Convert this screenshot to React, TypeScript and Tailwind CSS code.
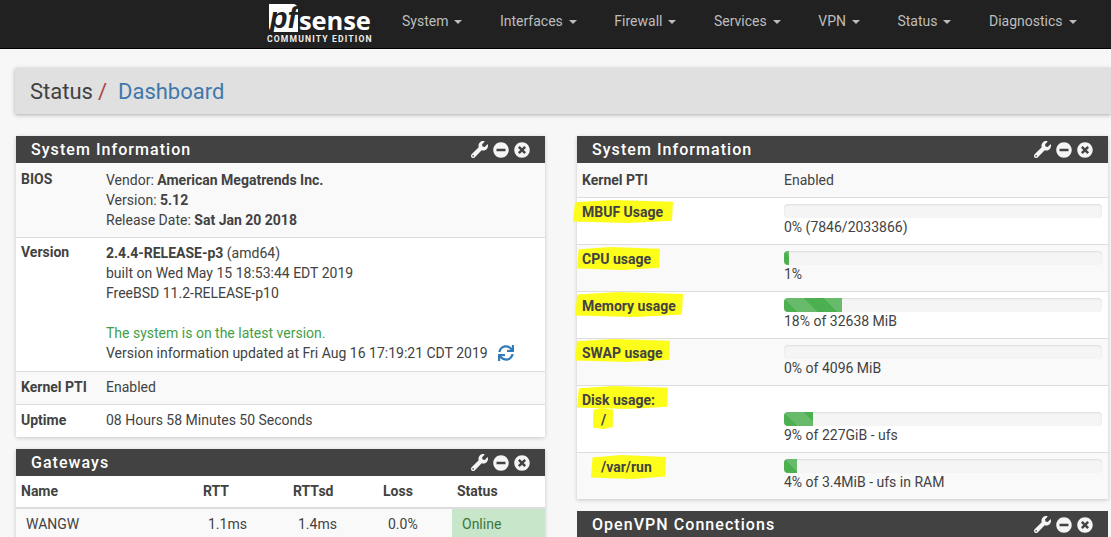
import { FaWrench, FaMinusCircle, FaTimesCircle, FaSync } from "react-icons/fa";

const nav = ["System", "Interfaces", "Firewall", "Services", "VPN", "Status", "Diagnostics"];

function Heading({ title }: { title: string }) {
  return (
    <div className="h-[27px] bg-[#424242] flex items-center justify-between pl-[15px] pr-[15px] shrink-0">
      <span className="text-white text-[16px] font-medium tracking-[1.05px] leading-none pt-[1px]">{title}</span>
      <span className="flex items-center gap-[5px] text-[#f5f5f5]">
        <FaWrench className="w-[17px] h-[17px]" />
        <FaMinusCircle className="w-[16px] h-[16px]" />
        <FaTimesCircle className="w-[16px] h-[16px]" />
      </span>
    </div>
  );
}

function Mark({ className }: { className: string }) {
  return (
    <span
      className={`absolute bg-[#fdfd1c] [clip-path:polygon(2%_10%,40%_0,100%_8%,99%_90%,55%_100%,0_94%)] ${className}`}
    />
  );
}

function Bar({ pct, text }: { pct: number; text: string }) {
  return (
    <div className="w-[318px]">
      <div className="h-[14px] bg-[#f5f5f5] rounded-[4px] overflow-hidden shadow-[inset_0_1px_2px_rgba(0,0,0,0.1)]">
        <div
          className="h-full bg-[#4caf50] bg-[linear-gradient(45deg,rgba(255,255,255,.15)_25%,transparent_25%,transparent_50%,rgba(255,255,255,.15)_50%,rgba(255,255,255,.15)_75%,transparent_75%,transparent)] bg-[length:40px_40px]"
          style={{ width: `${pct}%` }}
        />
      </div>
      <div className="leading-[20px] -mt-[1px]">{text}</div>
    </div>
  );
}

function UsageRow({
  label,
  pct,
  text,
  h,
  odd,
  mark,
}: {
  label: string;
  pct: number;
  text: string;
  h: string;
  odd?: boolean;
  mark: string;
}) {
  return (
    <div className={`${h} flex border-t border-[#dddddd] ${odd ? "bg-[#f9f9f9]" : "bg-white"}`}>
      <div className="w-[207px] pl-[5px] pt-[4px] font-bold leading-[20px] relative">
        <Mark className={mark} />
        <span className="relative">{label}</span>
      </div>
      <div className="pt-[6px]">
        <Bar pct={pct} text={text} />
      </div>
    </div>
  );
}

export default function App() {
  return (
    <div className="w-[1111px] h-[537px] overflow-hidden bg-[#f7f7f7] text-[14px] text-[#424242] font-['Roboto',sans-serif]">
      <header className="h-[49px] bg-[#212121] border-b border-black flex items-start pl-[267px]">
        <div className="w-[106px] shrink-0 flex flex-col items-start pt-[4px]">
          <div className="flex items-end h-[28px] pl-[2px]">
            <span className="bg-white text-[#212121] italic font-bold text-[29px] leading-[28px] h-[28px] w-[29px] flex items-center justify-center rounded-tr-[5px] rounded-bl-[5px] font-['Liberation_Sans',sans-serif]">
              pf
            </span>
            <span className="text-white font-bold text-[25.5px] leading-[24px] ml-[1px] tracking-[-0.1px] font-['Open_Sans',sans-serif]">sense</span>
          </div>
          <span className="text-[#eeeeee] font-bold text-[8.6px] leading-[10px] tracking-[1.15px] mt-[2px] whitespace-nowrap">
            COMMUNITY EDITION
          </span>
        </div>
        <nav className="flex gap-[37.5px] ml-[29px] mt-[11px] leading-[20px] text-[#bdbdbd] whitespace-nowrap">
          {nav.map((n) => (
            <span key={n} className="flex items-center">
              {n}
              <span className="ml-[6px] mt-[1px] w-0 h-0 border-x-[4px] border-x-transparent border-t-[4px] border-t-[#bdbdbd]" />
            </span>
          ))}
        </nav>
      </header>

      <div className="ml-[15px] mt-[19px] h-[46px] bg-[#e0e0e0] shadow-[0_1px_4px_rgba(0,0,0,0.3)] flex items-center pl-[15px] pt-[1px] text-[22px] leading-none">
        <span>Status</span>
        <span className="text-[#a94442] ml-[5px]">/</span>
        <span className="text-[#4078ab] ml-[11px]">Dashboard</span>
      </div>

      <div className="flex mt-[22px] pl-[16px] gap-[32px] items-start">
        <div className="w-[529px] shrink-0">
          <section className="shadow-[0_1px_4px_rgba(0,0,0,0.2)] mb-[12px]">
            <Heading title="System Information" />
            <div className="h-[74px] flex bg-[#f9f9f9] border-t border-transparent">
              <div className="w-[90px] pl-[5px] pt-[5px] font-bold leading-[20px]">BIOS</div>
              <div className="pt-[6px] leading-[20px]">
                <div>Vendor: <b>American Megatrends Inc.</b></div>
                <div>Version: <b>5.12</b></div>
                <div>Release Date: <b>Sat Jan 20 2018</b></div>
              </div>
            </div>
            <div className="h-[134px] flex bg-white border-t border-[#dddddd]">
              <div className="w-[90px] pl-[5px] pt-[4px] font-bold leading-[20px]">Version</div>
              <div className="pt-[5px] leading-[20px]">
                <div><b>2.4.4-RELEASE-p3</b> (amd64)</div>
                <div>built on Wed May 15 18:53:44 EDT 2019</div>
                <div>FreeBSD 11.2-RELEASE-p10</div>
                <div className="h-[20px]" />
                <div className="text-[#43a047]">The system is on the latest version.</div>
                <div className="flex items-center">
                  Version information updated at Fri Aug 16 17:19:21 CDT 2019
                  <FaSync className="ml-[10px] w-[16px] h-[16px] text-[#337ab7]" />
                </div>
              </div>
            </div>
            <div className="h-[33px] flex items-start pt-[5px] leading-[20px] bg-[#f9f9f9] border-t border-[#dddddd]">
              <div className="w-[90px] pl-[5px] font-bold">Kernel PTI</div>
              <div>Enabled</div>
            </div>
            <div className="h-[33px] flex items-start pt-[5px] leading-[20px] bg-white border-t border-[#dddddd]">
              <div className="w-[90px] pl-[5px] font-bold">Uptime</div>
              <div>08 Hours 58 Minutes 50 Seconds</div>
            </div>
          </section>
          <section className="shadow-[0_1px_4px_rgba(0,0,0,0.2)]">
            <Heading title="Gateways" />
            <div className="h-[33px] flex items-center bg-white border-b-2 border-[#dddddd] font-bold">
              <div className="w-[187px] pl-[5px]">Name</div>
              <div className="w-[90px]">RTT</div>
              <div className="w-[90px]">RTTsd</div>
              <div className="w-[74px]">Loss</div>
              <div>Status</div>
            </div>
            <div className="h-[32px] flex items-start pt-[5px] leading-[20px] bg-[#f9f9f9] relative">
              <div className="w-[187px] pl-[10px]">WANGW</div>
              <div className="w-[90px] pl-[5px]">1.1ms</div>
              <div className="w-[90px] pl-[5px]">1.4ms</div>
              <div className="w-[69px] pl-[5px]">0.0%</div>
              <div className="flex-1 self-stretch -mt-[5px] pt-[5px] bg-[#c8e6c9] pl-[10px] text-[#3c763d]">Online</div>
            </div>
          </section>
        </div>

        <div className="w-[531px] shrink-0">
          <section className="shadow-[0_1px_4px_rgba(0,0,0,0.2)] mb-[12px]">
            <Heading title="System Information" />
            <div className="h-[34px] flex items-center bg-[#f9f9f9]">
              <div className="w-[207px] pl-[5px] font-bold">Kernel PTI</div>
              <div>Enabled</div>
            </div>
            <UsageRow label="MBUF Usage" pct={0} text="0% (7846/2033866)" h="h-[47px]" mark="left-[-4px] top-[2px] w-[100px] h-[23px]" />
            <UsageRow label="CPU usage" pct={1.5} text="1%" h="h-[47px]" odd mark="left-0 top-[2px] w-[83px] h-[23px]" />
            <UsageRow label="Memory usage" pct={18.2} text="18% of 32638 MiB" h="h-[47px]" mark="left-[-2px] top-0 w-[108px] h-[25px]" />
            <UsageRow label="SWAP usage" pct={0} text="0% of 4096 MiB" h="h-[47px]" odd mark="left-[-2px] top-0 w-[95px] h-[23px]" />
            <div className="h-[67px] flex bg-white border-t border-[#dddddd]">
              <div className="w-[207px] pl-[5px] pt-[4px] font-bold leading-[20px] relative">
                <Mark className="left-0 top-0 w-[91px] h-[23px]" />
                <Mark className="left-[16px] top-[22px] w-[20px] h-[21px]" />
                <span className="relative block">Disk usage:</span>
                <span className="relative block pl-[19px]">/</span>
              </div>
              <div className="pt-[26px]">
                <Bar pct={9} text="9% of 227GiB - ufs" />
              </div>
            </div>
            <div className="h-[47px] flex bg-[#f9f9f9] border-t border-[#dddddd]">
              <div className="w-[207px] pl-[24px] pt-[4px] font-bold leading-[20px] relative">
                <Mark className="left-[14px] top-[2px] w-[75px] h-[24px]" />
                <span className="relative">/var/run</span>
              </div>
              <div className="pt-[6px]">
                <Bar pct={4} text="4% of 3.4MiB - ufs in RAM" />
              </div>
            </div>
          </section>
          <section>
            <Heading title="OpenVPN Connections" />
          </section>
        </div>
      </div>
    </div>
  );
}
